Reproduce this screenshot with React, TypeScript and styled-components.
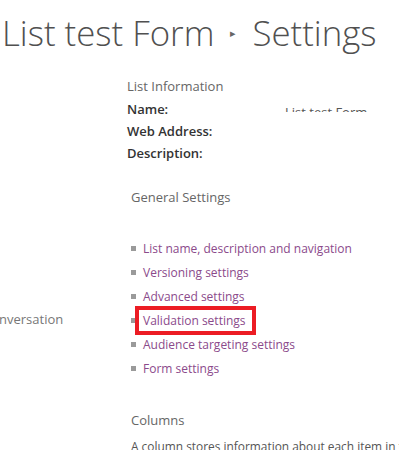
import React from 'react'
import styled, { createGlobalStyle } from 'styled-components'

const GlobalStyle = createGlobalStyle`
    html, body {
        margin: 0;
        padding: 0;
        background: #ffffff;
        overflow: hidden;
    }
    body {
        font-family: 'Open Sans', 'Noto Sans', sans-serif;
        color: #444444;
    }
`

const Page = styled.div`
    width: 399px;
    height: 450px;
    overflow: hidden;
`

const PageTitle = styled.h1`
    margin: 0;
    padding: 0 0 0 2px;
    height: 66px;
    font-size: 34.8px;
    font-weight: 300;
    line-height: 50px;
    color: #505050;
    white-space: nowrap;
    display: flex;
    align-items: center;
    gap: 16px;
`

const Crumb = styled.span`
    font-size: 11px;
    color: #666666;
`

const Body = styled.div`
    display: flex;
`

const Nav = styled.nav`
    width: 127px;
    flex-shrink: 0;
    overflow: hidden;
    padding-top: 244px;
`

const NavItem = styled.div`
    margin-left: -17px;
    font-size: 13px;
    color: #777777;
    white-space: nowrap;
`

const Main = styled.main`
    flex: 1;
    min-width: 0;
    padding-top: 10px;
`

const SectionTitle = styled.div`
    font-size: 13px;
    color: #666666;
    line-height: 20px;
    white-space: nowrap;
`

const InfoGrid = styled.dl`
    margin: 2px 0 0;
    display: grid;
    grid-template-columns: 158px 1fr;
    grid-auto-rows: 22px;
    align-items: center;
`

const Label = styled.dt`
    font-size: 13px;
    font-weight: 600;
    color: #333333;
    white-space: nowrap;
`

const Value = styled.dd`
    margin: 0;
    align-self: start;
    height: 9px;
    margin-top: 5px;
    overflow: hidden;
    font-size: 13px;
    line-height: 18px;
    color: #555555;
    white-space: nowrap;
`

const Settings = styled.div`
    padding-left: 4px;
    margin-top: 23px;
`

const LinkList = styled.ul`
    list-style: none;
    margin: 29px 0 0;
    padding: 0;
`

const LinkItem = styled.li`
    display: flex;
    align-items: center;
    height: 24px;
    gap: 7px;
`

const Bullet = styled.span`
    width: 5px;
    height: 5px;
    background: #9a9a9a;
    flex-shrink: 0;
`

const SettingLink = styled.a<{ $marked?: boolean }>`
    font-size: 12px;
    color: #8b4a8b;
    text-decoration: none;
    white-space: nowrap;
    line-height: 17px;
    padding: 2px 6px 2px 4px;
    margin-left: -4px;
    outline: ${(p) => (p.$marked ? '4px solid #ec1c24' : 'none')};
    outline-offset: 0;
`

const Columns = styled.div`
    margin-top: 30px;
`

const Description = styled.p`
    margin: 8px 0 0;
    font-size: 11.9px;
    line-height: 17px;
    color: #555555;
    white-space: nowrap;
`

const links = [
    'List name, description and navigation',
    'Versioning settings',
    'Advanced settings',
    'Validation settings',
    'Audience targeting settings',
    'Form settings',
]

export default function App() {
    return (
        <Page>
            <GlobalStyle />
            <PageTitle>
                <span>List test Form</span>
                <Crumb>▸</Crumb>
                <span>Settings</span>
            </PageTitle>
            <Body>
                <Nav>
                    <NavItem>Conversation</NavItem>
                </Nav>
                <Main>
                    <SectionTitle>List Information</SectionTitle>
                    <InfoGrid>
                        <Label>Name:</Label>
                        <Value>List test Form</Value>
                        <Label>Web Address:</Label>
                        <dd />
                        <Label>Description:</Label>
                        <dd />
                    </InfoGrid>
                    <Settings>
                        <SectionTitle>General Settings</SectionTitle>
                        <LinkList>
                            {links.map((l) => (
                                <LinkItem key={l}>
                                    <Bullet />
                                    <SettingLink href="#" $marked={l === 'Validation settings'}>
                                        {l}
                                    </SettingLink>
                                </LinkItem>
                            ))}
                        </LinkList>
                        <Columns>
                            <SectionTitle>Columns</SectionTitle>
                            <Description>
                                A column stores information about each item in the list.
                            </Description>
                        </Columns>
                    </Settings>
                </Main>
            </Body>
        </Page>
    )
}
